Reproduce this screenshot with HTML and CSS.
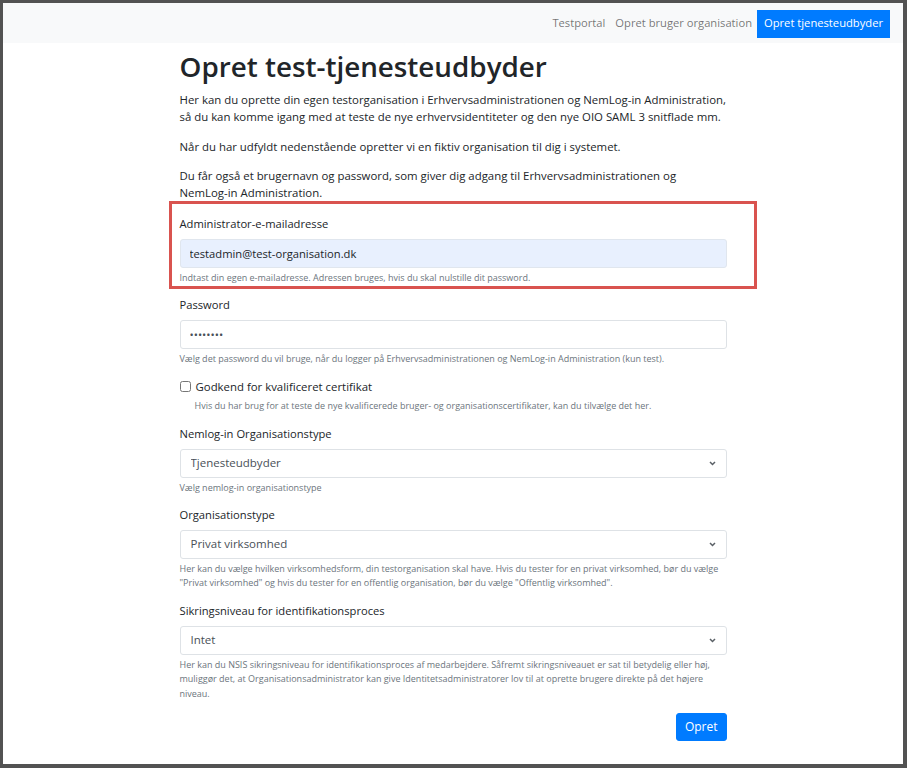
FILE: index.html
```html
<!DOCTYPE html>
<html lang="da">
<head>
    <meta charset="UTF-8">
    <meta name="viewport" content="width=device-width, initial-scale=1.0">
    <title>Opret test-tjenesteudbyder</title>
    <link rel="stylesheet" href="styles.css">
</head>
<body>
<div class="frame">
    <nav class="navbar">
        <ul class="nav">
            <li><a href="#" class="nav-link">Testportal</a></li>
            <li><a href="#" class="nav-link">Opret bruger organisation</a></li>
            <li><a href="#" class="nav-link active">Opret tjenesteudbyder</a></li>
        </ul>
    </nav>

    <main class="container">
        <h1>Opret test-tjenesteudbyder</h1>
        <p>Her kan du oprette din egen testorganisation i Erhvervsadministrationen og NemLog-in Administration, så du kan komme igang med at teste de nye erhvervsidentiteter og den nye OIO SAML 3 snitflade mm.</p>
        <p>Når du har udfyldt nedenstående opretter vi en fiktiv organisation til dig i systemet.</p>
        <p>Du får også et brugernavn og password, som giver dig adgang til Erhvervsadministrationen og <span class="nowrap">NemLog-in</span> Administration.</p>

        <form>
            <div class="form-group marked">
                <label for="email">Administrator-e-mailadresse</label>
                <input type="email" id="email" class="form-control autofill" value="testadmin@test-organisation.dk">
                <small>Indtast din egen e-mailadresse. Adressen bruges, hvis du skal nulstille dit password.</small>
                <span class="mark"></span>
            </div>

            <div class="form-group">
                <label for="password">Password</label>
                <input type="password" id="password" class="form-control" value="abcdefgh">
                <small>Vælg det password du vil bruge, når du logger på Erhvervsadministrationen og NemLog-in Administration (kun test).</small>
            </div>

            <div class="form-group">
                <div class="check">
                    <input type="checkbox" id="kvalificeret">
                    <label for="kvalificeret">Godkend for kvalificeret certifikat</label>
                </div>
                <small class="indent">Hvis du har brug for at teste de nye kvalificerede bruger- og organisationscertifikater, kan du tilvælge det her.</small>
            </div>

            <div class="form-group">
                <label for="nemlogtype">Nemlog-in Organisationstype</label>
                <div class="select-wrap">
                    <select id="nemlogtype" class="form-control">
                        <option>Tjenesteudbyder</option>
                    </select>
                    <svg class="chevron" width="7" height="5" viewBox="0 0 7 5"><path d="M1 1l2.5 2.5L6 1" fill="none" stroke="#5a6066" stroke-width="1.5"/></svg>
                </div>
                <small>Vælg nemlog-in organisationstype</small>
            </div>

            <div class="form-group">
                <label for="orgtype">Organisationstype</label>
                <div class="select-wrap">
                    <select id="orgtype" class="form-control">
                        <option>Privat virksomhed</option>
                        <option>Offentlig virksomhed</option>
                    </select>
                    <svg class="chevron" width="7" height="5" viewBox="0 0 7 5"><path d="M1 1l2.5 2.5L6 1" fill="none" stroke="#5a6066" stroke-width="1.5"/></svg>
                </div>
                <small>Her kan du vælge hvilken virksomhedsform, din testorganisation skal have. Hvis du tester for en privat virksomhed, bør du vælge "Privat virksomhed" og hvis du tester for en offentlig organisation, bør du vælge "Offentlig virksomhed".</small>
            </div>

            <div class="form-group">
                <label for="sikring">Sikringsniveau for identifikationsproces</label>
                <div class="select-wrap">
                    <select id="sikring" class="form-control">
                        <option>Intet</option>
                        <option>Betydelig</option>
                        <option>Høj</option>
                    </select>
                    <svg class="chevron" width="7" height="5" viewBox="0 0 7 5"><path d="M1 1l2.5 2.5L6 1" fill="none" stroke="#5a6066" stroke-width="1.5"/></svg>
                </div>
                <small>Her kan du NSIS sikringsniveau for identifikationsproces af medarbejdere. Såfremt sikringsniveauet er sat til betydelig eller høj, muliggør det, at Organisationsadministrator kan give Identitetsadministratorer lov til at oprette brugere direkte på det højere niveau.</small>
            </div>

            <div class="actions">
                <button type="submit" class="btn">Opret</button>
            </div>
        </form>
    </main>
</div>
</body>
</html>
```

FILE: styles.css
```css
* {
    box-sizing: border-box;
}

html, body {
    margin: 0;
    height: 100%;
}

body {
    font-family: "Open Sans", "Liberation Sans", sans-serif;
    font-size: 11.2px;
    line-height: 16.8px;
    color: #212529;
    background: #525252;
}

.frame {
    height: 768px;
    border-style: solid;
    border-color: #525252;
    border-width: 3px 4px 4px 3px;
    background: #fff;
    overflow: hidden;
}

/* navbar */

.navbar {
    background: #f8f9fa;
    height: 40px;
    padding: 7px 13px 5px;
    display: flex;
    justify-content: flex-end;
}

.nav {
    list-style: none;
    margin: 0;
    padding: 0;
    display: flex;
}

.nav-link {
    display: block;
    padding: 5px 5px;
    height: 28px;
    color: rgba(0, 0, 0, .55);
    text-decoration: none;
}

.nav-link.active {
    background: #007bff;
    color: #fff;
    padding: 5px 7px;
}

/* content */

.container {
    width: 547px;
    margin: 0 auto;
}

h1 {
    font-size: 27.8px;
    font-weight: 600;
    line-height: 35px;
    margin: 6px 0 8px;
}

p {
    margin: 0 0 13px;
    font-size: 11.4px;
}

.nowrap {
    white-space: nowrap;
}

.form-group {
    margin-bottom: 12px;
}

.form-group.marked {
    position: relative;
    padding-top: 1px;
}

.mark {
    position: absolute;
    left: -11px;
    right: -30px;
    top: -14px;
    bottom: -4px;
    border: 3px solid #d9534f;
    pointer-events: none;
}

label {
    display: block;
    margin-bottom: 6px;
}

.form-control {
    display: block;
    width: 100%;
    height: 29px;
    padding: 0 9px;
    font: inherit;
    color: #495057;
    background: #fff;
    border: 1px solid #dee2e6;
    border-radius: 3px;
}

.form-control.autofill {
    background: #e8f0fe;
    border-color: #e0e6ee;
    color: #212529;
}

select.form-control {
    appearance: none;
    -webkit-appearance: none;
    font-size: 11.5px;
    padding-left: 10px;
}

.select-wrap {
    position: relative;
}

.chevron {
    position: absolute;
    right: 11px;
    top: 12px;
}

small {
    display: block;
    margin-top: 3px;
    font-size: 9px;
    line-height: 14.5px;
    color: #6c757d;
}

small.indent {
    padding-left: 15px;
    margin-top: 4px;
}

.check {
    display: flex;
    align-items: center;
    gap: 5px;
}

.check input {
    margin: 0;
    width: 11px;
    height: 11px;
}

.check label {
    margin: 0;
    font-size: 11.4px;
}

.actions {
    display: flex;
    justify-content: flex-end;
    margin-top: 12px;
}

.btn {
    font: inherit;
    font-size: 12px;
    color: #fff;
    background: #007bff;
    border: 1px solid #007bff;
    border-radius: 3px;
    height: 28px;
    padding: 0 8px;
}
```
